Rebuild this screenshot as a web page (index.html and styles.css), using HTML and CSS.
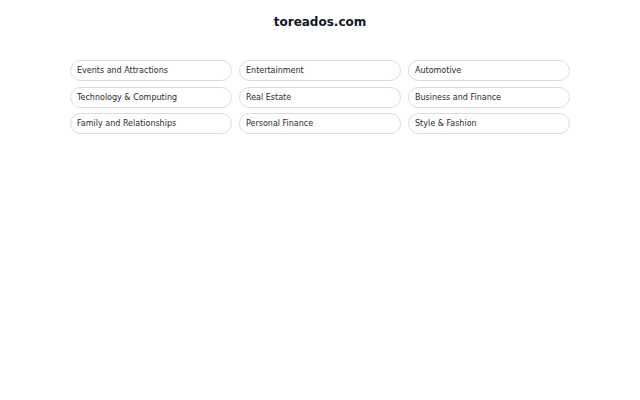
FILE: index.html
```html
<!DOCTYPE html>
<html>
<head>
<meta charset="utf-8">
<link rel="stylesheet" href="styles.css">
</head>
<body>
<main class="page">
  <h1 class="title">toreados.com</h1>
  <div class="grid">
    <a class="pill">Events and Attractions</a>
    <a class="pill">Entertainment</a>
    <a class="pill">Automotive</a>
    <a class="pill">Technology &amp; Computing</a>
    <a class="pill">Real Estate</a>
    <a class="pill">Business and Finance</a>
    <a class="pill">Family and Relationships</a>
    <a class="pill">Personal Finance</a>
    <a class="pill">Style &amp; Fashion</a>
  </div>
</main>
</body>
</html>
```
FILE: styles.css
```css
html, body {
  margin: 0;
  padding: 0;
  background: #ffffff;
}
body {
  font-family: "DejaVu Sans", sans-serif;
  color: #222;
}
.page {
  display: flex;
  flex-direction: column;
  align-items: center;
  padding-top: 14px;
}
.title {
  margin: 0;
  font-size: 12px;
  font-weight: bold;
  line-height: 16px;
  color: #111827;
}
.grid {
  margin-top: 30px;
  width: 500px;
  display: grid;
  grid-template-columns: repeat(3, 1fr);
  gap: 5.5px 7px;
}
.pill {
  display: flex;
  align-items: center;
  height: 19px;
  padding: 0 6px;
  border: 1px solid #dcdcdc;
  border-radius: 11px;
  font-size: 8px;
  color: #2b2b2b;
  text-decoration: none;
}
```
